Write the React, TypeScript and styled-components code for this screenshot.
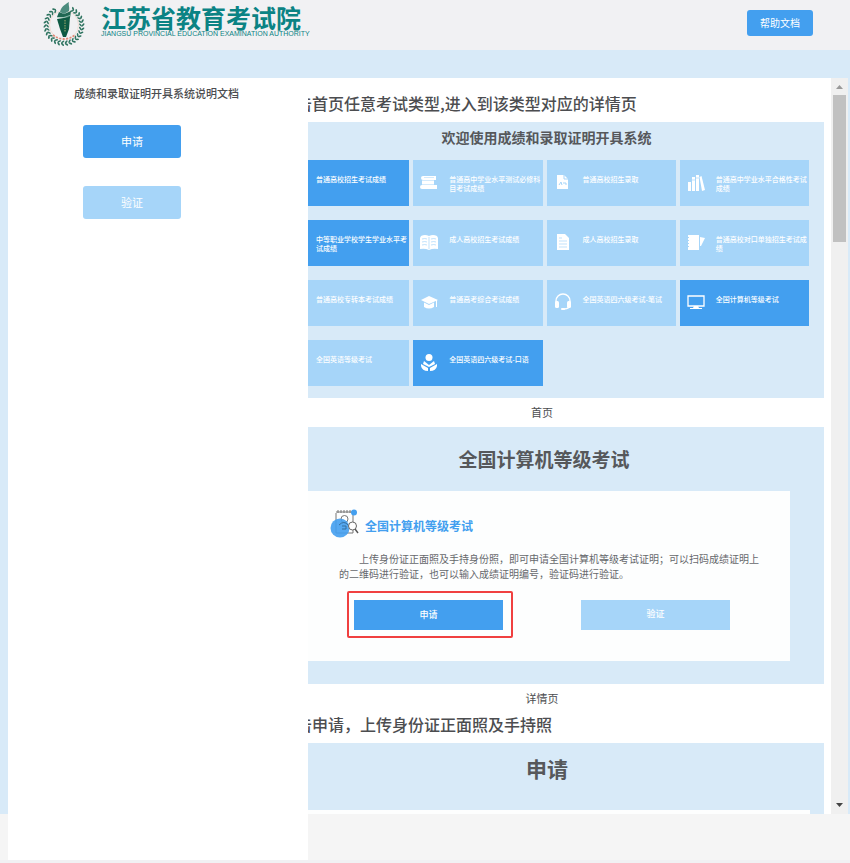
import React from "react";
import styled, { createGlobalStyle } from "styled-components";

const colors = {
  primary: "#439fef",
  pale: "#a6d5f9",
  sky: "#d8eaf8",
  bar: "#f1f1f3",
  floor: "#f5f5f5",
  text: "#4c4d50",
  teal: "#0b8384",
};

const GlobalStyle = createGlobalStyle`
  *, *::before, *::after { box-sizing: border-box; }
  body {
    margin: 0;
    background: ${colors.bar};
    color: ${colors.text};
    font-family: "Noto Sans CJK SC", "Noto Sans", sans-serif;
    overflow: hidden;
  }
  h1, h2, h3, p, figure { margin: 0; }
  button { font-family: inherit; }
`;

const Page = styled.div`
  display: flex;
  flex-direction: column;
  height: 100vh;
  padding-bottom: 3px;
`;

const Header = styled.header`
  display: flex;
  flex: none;
  align-items: flex-start;
  justify-content: space-between;
  height: 50px;
  padding: 0 37px 0 42px;
`;

const Brand = styled.a`
  display: flex;
  gap: 15px;
  color: ${colors.teal};
  text-decoration: none;
`;

const BrandText = styled.div`
  display: flex;
  flex-direction: column;
  padding-top: 4px;
`;

const BrandName = styled.span`
  font-size: 25px;
  font-weight: 700;
  line-height: 26px;
  white-space: nowrap;
`;

const BrandLatin = styled.span`
  font: 7px/8px "Liberation Sans", Arial, sans-serif;
  white-space: nowrap;
`;

const HelpButton = styled.button`
  height: 26px;
  margin-top: 10px;
  padding: 0 13px 2px;
  border: 0;
  border-radius: 3px;
  background: ${colors.primary};
  color: #fff;
  font-size: 10px;
`;

const Body = styled.main`
  flex: 1;
  min-height: 0;
  background: ${colors.floor};
`;

const Stage = styled.div`
  display: flex;
  align-items: flex-start;
  height: calc(100% - 46px);
  padding: 28px 2px 0 8px;
  background: ${colors.sky};
`;

const Sidebar = styled.aside`
  flex: none;
  width: 300px;
  height: calc(100% + 46px);
  padding: 7px 66px;
  background: #fff;
`;

const SidebarTitle = styled.h1`
  font-size: 11px;
  font-weight: 500;
  line-height: 16px;
  white-space: nowrap;
`;

const SidebarNav = styled.nav`
  display: flex;
  flex-direction: column;
  gap: 28px;
  width: 98px;
  margin: 24px 0 0 9px;
`;

const NavButton = styled.button<{ $active?: boolean }>`
  height: 33px;
  padding: 0 0 2px;
  border: 0;
  border-radius: 3px;
  background: ${(p) => (p.$active ? colors.primary : colors.pale)};
  color: #fff;
  font-size: 11px;
`;

const DocPane = styled.section`
  display: flex;
  flex: 1;
  min-width: 0;
  height: 100%;
  background: #fff;
`;

const DocScroll = styled.div`
  flex: 1;
  min-width: 0;
  padding: 13px 7px 0 0;
  overflow: hidden auto;
  scrollbar-width: none;
`;

const Doc = styled.article`
  margin-left: -48px;
`;

const Step = styled.h2`
  margin-bottom: 7px;
  padding-left: 20px;
  font-size: 16px;
  font-weight: 500;
  line-height: 24px;
  white-space: nowrap;
`;

const Caption = styled.figcaption`
  height: 28px;
  font-size: 11px;
  line-height: 28px;
  text-align: center;
`;

const CaptionedShot = styled.figure<{ $gapAfter?: boolean }>`
  padding-bottom: ${(p) => (p.$gapAfter ? 1 : 0)}px;
`;

const Shot = styled.div<{ $pad: string }>`
  padding: ${(p) => p.$pad};
  background: ${colors.sky};
`;

const ShotTitle = styled.h3<{ $size: number; $gap: number }>`
  margin-bottom: ${(p) => p.$gap}px;
  padding-left: 4px;
  color: #56585b;
  font-size: ${(p) => p.$size}px;
  font-weight: 700;
  line-height: ${(p) => (p.$size > 16 ? 28 : 20)}px;
  text-align: center;
`;

const ExamGrid = styled.div`
  display: grid;
  grid-template-columns: repeat(4, 1fr);
  grid-auto-rows: 46px;
  gap: 14px 4px;
`;

const ExamCard = styled.div<{ $active?: boolean }>`
  display: flex;
  background: ${(p) => (p.$active ? colors.primary : colors.pale)};
  color: #fff;
`;

const ExamIcon = styled.span`
  display: flex;
  flex: none;
  align-items: center;
  justify-content: center;
  width: 32px;
  height: 46px;
  margin-right: 4px;
`;

const ExamName = styled.span`
  width: 92px;
  padding-top: 15px;
  font-size: 7px;
  font-weight: 500;
  line-height: 9px;
  word-break: break-all;
`;

const WhiteBox = styled.div`
  min-height: 170px;
  padding: 17px 0 23px 36px;
  background: #fdfefe;
`;

const BoxHead = styled.div`
  display: flex;
  align-items: center;
  gap: 5px;
  height: 32px;
`;

const BoxTitle = styled.strong`
  padding-top: 3px;
  color: ${colors.primary};
  font-size: 12px;
  line-height: 20px;
`;

const Intro = styled.p`
  max-width: 434px;
  margin-top: 11px;
  padding: 0 4px 0 9px;
  color: #66686c;
  font-size: 10px;
  line-height: 15px;
  text-indent: 20px;
`;

const Actions = styled.div`
  display: flex;
  align-items: center;
  gap: 68px;
  margin: 10px 0 0 17px;
`;

const Highlight = styled.div`
  padding: 7px 8px 6px 5px;
  border: 2px solid #f04040;
  border-radius: 2px;
`;

const ActionButton = styled.button<{ $active?: boolean }>`
  display: block;
  width: 149px;
  height: 30px;
  padding: 0 0 2px;
  border: 0;
  background: ${(p) => (p.$active ? colors.primary : colors.pale)};
  color: #fff;
  font-size: 9px;
  font-weight: 500;
`;

const ScrollTrack = styled.div`
  display: flex;
  flex: none;
  flex-direction: column;
  justify-content: space-between;
  width: 17px;
  background: #f0f0f0;
`;

const ScrollThumb = styled.div`
  height: 20%;
  margin: 0 2px auto;
  background: #c1c1c1;
`;

const ArrowIcon = ({ down }: { down?: boolean }) => (
  <svg width="17" height="17" viewBox="0 0 17 17">
    <path d={down ? "M5 6h7l-3.500 4z" : "M5 11h7l-3.500-4z"} fill={down ? "#444" : "#999"} />
  </svg>
);

const Emblem = () => {
  const leaves = Array.from({ length: 26 }, (_, i) => 30 + (i * 300) / 25);
  return (
    <svg width="44" height="48" viewBox="0 0 44 48" aria-hidden="true">
      {leaves.map((a, i) => (
        <g key={i} transform={`rotate(${a} 22 25.500)`} fill="#2f7460">
          <ellipse cx="21.500" cy="6.500" rx="2" ry="0.900" transform="rotate(42 21.500 6.500)" />
          <ellipse cx="21.500" cy="9" rx="1.900" ry="0.800" transform="rotate(-42 21.500 9)" />
        </g>
      ))}
      <circle cx="22" cy="25" r="14.500" fill="none" stroke="#f0d5cc" strokeWidth="0.800" />
      <path d="M11 35q11 8 22 0" fill="none" stroke="#e08a78" strokeWidth="1.800" strokeDasharray="2 1.500" />
      <path d="M18 12c1-5 4-7 9-10-1 3 1 5 0 9l-5 3z" fill="#4c8c7e" />
      <path d="M15 17l2-5 5 2 7-3-1 7z" fill="#1f6753" />
      <path d="M15 19l13-2-1 12-3 8h-3l-3-8z" fill="#0e5a43" />
      <path d="M23 20v12" stroke="#8da06a" strokeWidth="1.200" strokeDasharray="1.500 1" />
      <path d="M15 17.500q7 1 13-2" fill="none" stroke="#acd1c4" strokeWidth="0.800" />
    </svg>
  );
};

const Icon = ({ children }: { children: React.ReactNode }) => (
  <svg width="20" height="20" viewBox="0 0 20 20" fill="#fff" aria-hidden="true">
    {children}
  </svg>
);

const icons: Record<string, React.ReactNode> = {
  stack: (
    <Icon>
      <path d="M4 3h13v4H4a2 2 0 0 1 0-4zM3 7.500h12v4H3zM3 12h15v4H3a2 2 0 0 1 0-4z" />
      <path d="M5 4.500h10" stroke="#a6d5f9" strokeWidth="0.500" />
    </Icon>
  ),
  file: (
    <Icon>
      <path d="M4 2h7l4 4v10H4z" />
      <path d="M11 2v4h4M6 12l2-3 1 3M10 10h3v2" fill="none" stroke="#a6d5f9" />
    </Icon>
  ),
  shelf: (
    <Icon>
      <path d="M2 9h3v9H2zM6 4h3v14H6zM10 2h3v16h-3zM13.500 4l2-1L19 17l-3 1z" />
      <path d="M6 7h3M10 5h3" stroke="#a6d5f9" strokeWidth="0.700" />
    </Icon>
  ),
  open: (
    <Icon>
      <path d="M2 3q4-2 8 0 4-2 8 0l1 2v11q-5-1-9 1-4-2-9-1V5z" />
      <path d="M10 4v12M3 6q3-1 5 0M3 9q3-1 5 0M3 12q3-1 5 0M12 6q3-1 5 0M12 9q3-1 5 0M12 12q3-1 5 0" fill="none" stroke="#a6d5f9" strokeWidth="0.700" />
    </Icon>
  ),
  sheet: (
    <Icon>
      <path d="M4 1h8l4 4v12H4z" />
      <path d="M6 5h3M6 8h8M6 11h8M6 14h8" stroke="#a6d5f9" strokeWidth="0.700" />
    </Icon>
  ),
  note: (
    <Icon>
      <path d="M2 2h11v15H2zM14 4l5 1-4 8h-1z" />
      <path d="M2 4.500h1M2 7.500h1M2 10.500h1M2 13.500h1" stroke="#a6d5f9" />
    </Icon>
  ),
  cap: (
    <Icon>
      <path d="M10 3l9 4-9 4-8-4zM5 9.500l5 2.500 5-2.500V14q-5 3-10 0zM17 7h1v7h-1z" />
    </Icon>
  ),
  headset: (
    <Icon>
      <path d="M3 10V8a7 7 0 0 1 14 0v3q0 5-6 5" fill="none" stroke="#fff" strokeWidth="1.400" />
      <rect x="2" y="8" width="4" height="7" rx="1.500" />
      <rect x="14" y="8" width="4" height="7" rx="1.500" />
      <rect x="8" y="15" width="4" height="2" rx="1" />
    </Icon>
  ),
  monitor: (
    <Icon>
      <path d="M2 3h16v10H2z" fill="none" stroke="#fff" strokeWidth="1.300" />
      <path d="M8 13h4l1 2h3v1H4v-1h3z" />
    </Icon>
  ),
  reader: (
    <Icon>
      <circle cx="10" cy="4.500" r="3.500" />
      <path d="M5 8l5 4 5-4 1 3-6 3-6-3zM2 11l7 4v3q-6 0-7-5zM18 11l-7 4v3q6 0 7-5z" />
    </Icon>
  ),
};

const SearchDocIcon = () => (
  <svg width="30" height="32" viewBox="0 0 30 32" fill="none" aria-hidden="true">
    <path d="M6 5v20h17V4M6 4h17" stroke="#777" strokeWidth="1" />
    <path d="M8 2v3M11 2v3M14 2v3M17 2v3M20 2v3" stroke="#777" />
    <circle cx="14.500" cy="11" r="3.500" stroke="#777" />
    <circle cx="10" cy="20" r="9.500" fill="#439fef" fillOpacity="0.900" />
    <path d="M9 17q5-5 9 0M12 18h4v3h-4" stroke="#356f9f" />
    <circle cx="24" cy="4.500" r="3" fill="#439fef" />
    <circle cx="22.500" cy="18" r="4" fill="#fff" stroke="#666" />
    <path d="M25 21l3 4" stroke="#555" strokeWidth="1.400" />
  </svg>
);

interface Exam {
  name: string;
  icon?: string;
  active?: boolean;
}

const exams: Exam[] = [
  { name: "普通高校招生考试成绩", active: true },
  { name: "普通高中学业水平测试必修科目考试成绩", icon: "stack" },
  { name: "普通高校招生录取", icon: "file" },
  { name: "普通高中学业水平合格性考试成绩", icon: "shelf" },
  { name: "中等职业学校学生学业水平考试成绩", active: true },
  { name: "成人高校招生考试成绩", icon: "open" },
  { name: "成人高校招生录取", icon: "sheet" },
  { name: "普通高校对口单独招生考试成绩", icon: "note" },
  { name: "普通高校专转本考试成绩" },
  { name: "普通高考综合考试成绩", icon: "cap" },
  { name: "全国英语四六级考试-笔试", icon: "headset" },
  { name: "全国计算机等级考试", icon: "monitor", active: true },
  { name: "全国英语等级考试" },
  { name: "全国英语四六级考试-口语", icon: "reader", active: true },
];

export default function App() {
  return (
    <Page lang="zh-CN">
      <GlobalStyle />
      <Header>
        <Brand href="#">
          <Emblem />
          <BrandText>
            <BrandName>江苏省教育考试院</BrandName>
            <BrandLatin>JIANGSU PROVINCIAL EDUCATION EXAMINATION AUTHORITY</BrandLatin>
          </BrandText>
        </Brand>
        <HelpButton type="button">帮助文档</HelpButton>
      </Header>
      <Body>
        <Stage>
          <Sidebar>
            <SidebarTitle>成绩和录取证明开具系统说明文档</SidebarTitle>
            <SidebarNav>
              <NavButton type="button" $active>申请</NavButton>
              <NavButton type="button">验证</NavButton>
            </SidebarNav>
          </Sidebar>
          <DocPane>
            <DocScroll>
              <Doc>
                <Step>点击首页任意考试类型,进入到该类型对应的详情页</Step>
                <CaptionedShot $gapAfter>
                  <Shot $pad="5px 15px 12px 20px">
                    <ShotTitle $size={14} $gap={13}>欢迎使用成绩和录取证明开具系统</ShotTitle>
                    <ExamGrid>
                      {exams.map((exam) => (
                        <ExamCard key={exam.name} $active={exam.active}>
                          <ExamIcon>{exam.icon && icons[exam.icon]}</ExamIcon>
                          <ExamName>{exam.name}</ExamName>
                        </ExamCard>
                      ))}
                    </ExamGrid>
                  </Shot>
                  <Caption>首页</Caption>
                </CaptionedShot>
                <CaptionedShot>
                  <Shot $pad="18px 34px 23px">
                    <ShotTitle $size={19} $gap={18}>全国计算机等级考试</ShotTitle>
                    <WhiteBox>
                      <BoxHead>
                        <SearchDocIcon />
                        <BoxTitle>全国计算机等级考试</BoxTitle>
                      </BoxHead>
                      <Intro>
                        上传身份证正面照及手持身份照，即可申请全国计算机等级考试证明；可以扫码成绩证明上的二维码进行验证，也可以输入成绩证明编号，验证码进行验证。
                      </Intro>
                      <Actions>
                        <Highlight>
                          <ActionButton type="button" $active>申请</ActionButton>
                        </Highlight>
                        <ActionButton type="button">验证</ActionButton>
                      </Actions>
                    </WhiteBox>
                  </Shot>
                  <Caption>详情页</Caption>
                </CaptionedShot>
                <Step>点击申请，上传身份证正面照及手持照</Step>
                <Shot $pad="11px 14px 23px 20px">
                  <ShotTitle $size={21} $gap={28}>申请</ShotTitle>
                  <WhiteBox />
                </Shot>
              </Doc>
            </DocScroll>
            <ScrollTrack aria-hidden="true">
              <ArrowIcon />
              <ScrollThumb />
              <ArrowIcon down />
            </ScrollTrack>
          </DocPane>
        </Stage>
      </Body>
    </Page>
  );
}
